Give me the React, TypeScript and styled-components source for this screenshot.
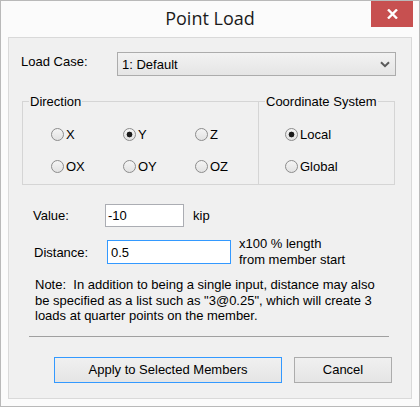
import React from 'react';
import styled, { createGlobalStyle } from 'styled-components';

const GlobalStyle = createGlobalStyle`
  html, body {
    margin: 0;
    padding: 0;
    background: #fbfbfb;
  }
  body {
    font-family: "Liberation Sans", Arial, sans-serif;
    font-size: 13px;
    font-weight: 400;
    color: #000;
  }
`;

const Window = styled.div`
  width: 420px;
  height: 407px;
  box-sizing: border-box;
  border: 1px solid #b9b9b9;
  background: #fbfbfb;
  padding: 0 7px 7px;
  display: flex;
  flex-direction: column;
`;

const TitleBar = styled.div`
  height: 36px;
  flex: none;
  display: grid;
  grid-template-columns: 1fr auto 1fr;
  align-items: start;
`;

const Title = styled.div`
  grid-column: 2;
  padding-top: 5px;
  font-family: "Open Sans", "Noto Sans", sans-serif;
  font-size: 18px;
  line-height: 24px;
  color: #1a1a1a;
`;

const CloseButton = styled.div`
  grid-column: 3;
  justify-self: end;
  width: 42px;
  height: 26px;
  margin-right: -1px;
  background: #c75050;
  display: flex;
  align-items: center;
  justify-content: center;
`;

const Client = styled.div`
  flex: 1;
  border: 1px solid #d9d9d9;
  background: #f0f0f0;
  display: flex;
  flex-direction: column;
`;

const LoadCaseRow = styled.div`
  display: flex;
  align-items: center;
  height: 24px;
  margin: 14px 0 0 12px;
`;

const RowLabel = styled.div<{ $width: number; $lift?: number }>`
  width: ${(p) => p.$width}px;
  flex: none;
  line-height: 15px;
  margin-bottom: ${(p) => (p.$lift ? p.$lift * 2 : 0)}px;
`;

const Select = styled.div`
  width: 279px;
  height: 24px;
  box-sizing: border-box;
  border: 1px solid #acacac;
  background: linear-gradient(#f2f2f2, #e5e5e5);
  display: flex;
  align-items: center;
  justify-content: space-between;
  padding: 0 5px 0 4px;
`;

const GroupRow = styled.div`
  display: flex;
  margin: 25px 0 0 13px;
`;

const GroupBox = styled.div<{ $width: number; $overlap?: boolean }>`
  width: ${(p) => p.$width}px;
  height: 84px;
  box-sizing: border-box;
  border: 1px solid #d5d5d5;
  margin-left: ${(p) => (p.$overlap ? -1 : 0)}px;
`;

const Caption = styled.div`
  display: table;
  margin: -8px 0 0 6px;
  padding: 0 1px;
  line-height: 15px;
  background: #f0f0f0;
`;

const RadioGrid = styled.div<{ $cols: number; $indent: number }>`
  display: grid;
  grid-template-columns: repeat(${(p) => p.$cols}, 72px);
  row-gap: 16px;
  margin: 17px 0 0 ${(p) => p.$indent}px;
`;

const RadioItem = styled.div`
  display: flex;
  align-items: center;
  gap: 2px;
  height: 16px;
`;

const RadioMark = styled.span<{ $checked?: boolean }>`
  flex: none;
  width: 13px;
  height: 13px;
  box-sizing: border-box;
  border: 1px solid #8c8c8c;
  border-radius: 50%;
  background: ${(p) =>
    p.$checked
      ? 'radial-gradient(circle, #1b1b1b 0 2.6px, transparent 3.2px), linear-gradient(#f4f4f4, #e2e2e2)'
      : 'linear-gradient(#f4f4f4, #e2e2e2)'};
`;

const RadioText = styled.span`
  line-height: 15px;
  font-weight: 400;
`;

const FieldRow = styled.div<{ $indent: number; $gap: number }>`
  display: flex;
  align-items: center;
  margin: ${(p) => p.$gap}px 0 0 ${(p) => p.$indent}px;
`;

const TextBox = styled.input<{ $width: number; $height: number; $focused?: boolean }>`
  width: ${(p) => p.$width}px;
  height: ${(p) => p.$height}px;
  box-sizing: border-box;
  margin: 0;
  padding: 0 0 0 ${(p) => (p.$focused ? 3 : 2)}px;
  border: 1px solid ${(p) => (p.$focused ? '#3399ff' : '#abadb3')};
  background: #fff;
  outline: none;
  font-family: "Liberation Sans", Arial, sans-serif;
  font-size: 13px;
  color: #000;
`;

const Unit = styled.div<{ $gap: number }>`
  margin-left: ${(p) => p.$gap}px;
  line-height: 16px;
`;

const Note = styled.p`
  margin: 9px 0 0 26px;
  line-height: 15.5px;
`;

const Separator = styled.div`
  width: 360px;
  height: 1px;
  margin: 12px 0 0 20px;
  background: #a0a0a0;
`;

const ButtonRow = styled.div`
  display: flex;
  gap: 12px;
  margin: 20px 0 0 45px;
`;

const Button = styled.button<{ $width: number; $default?: boolean }>`
  width: ${(p) => p.$width}px;
  height: 26px;
  margin: 0;
  padding: 0;
  box-sizing: border-box;
  border: 1px solid ${(p) => (p.$default ? '#3399ff' : '#acacac')};
  background: linear-gradient(#f0f0f0, #e5e5e5);
  font-family: "Liberation Sans", Arial, sans-serif;
  font-size: 13px;
  color: #000;
`;

const directions = ['X', 'Y', 'Z', 'OX', 'OY', 'OZ'];

function RadioOption({ label, checked }: { label: string; checked?: boolean }) {
  return (
    <RadioItem role="radio" aria-checked={!!checked}>
      <RadioMark $checked={checked} />
      <RadioText>{label}</RadioText>
    </RadioItem>
  );
}

export default function App() {
  return (
    <>
      <GlobalStyle />
      <Window>
        <TitleBar>
          <Title>Point Load</Title>
          <CloseButton>
            <svg width="11" height="10" viewBox="0 0 11 10">
              <path d="M1 0.5 L10 9.5 M10 0.5 L1 9.5" stroke="#fff" strokeWidth="2.4" />
            </svg>
          </CloseButton>
        </TitleBar>
        <Client>
          <LoadCaseRow>
            <RowLabel $width={96} $lift={3}>Load Case:</RowLabel>
            <Select>
              <span>1: Default</span>
              <svg width="10" height="7" viewBox="0 0 10 7">
                <path d="M1 1.2 L5 5.2 L9 1.2" fill="none" stroke="#5a5a5a" strokeWidth="2" />
              </svg>
            </Select>
          </LoadCaseRow>

          <GroupRow>
            <GroupBox $width={237}>
              <Caption>Direction</Caption>
              <RadioGrid $cols={3} $indent={28}>
                {directions.map((d) => (
                  <RadioOption key={d} label={d} checked={d === 'Y'} />
                ))}
              </RadioGrid>
            </GroupBox>
            <GroupBox $width={137} $overlap>
              <Caption>Coordinate System</Caption>
              <RadioGrid $cols={1} $indent={26}>
                <RadioOption label="Local" checked />
                <RadioOption label="Global" />
              </RadioGrid>
            </GroupBox>
          </GroupRow>

          <FieldRow $indent={24} $gap={19}>
            <RowLabel $width={72}>Value:</RowLabel>
            <TextBox $width={79} $height={23} defaultValue="-10" />
            <Unit $gap={9}>kip</Unit>
          </FieldRow>

          <FieldRow $indent={25} $gap={9}>
            <RowLabel $width={73}>Distance:</RowLabel>
            <TextBox $width={124} $height={24} $focused defaultValue="0.5" />
            <Unit $gap={8}>
              x100 % length
              <br />
              from member start
            </Unit>
          </FieldRow>

          <Note>
            Note:&nbsp; In addition to being a single input, distance may also
            <br />
            be specified as a list such as "3@0.25", which will create 3
            <br />
            loads at quarter points on the member.
          </Note>

          <Separator />

          <ButtonRow>
            <Button $width={228} $default>
              Apply to Selected Members
            </Button>
            <Button $width={98}>Cancel</Button>
          </ButtonRow>
        </Client>
      </Window>
    </>
  );
}
